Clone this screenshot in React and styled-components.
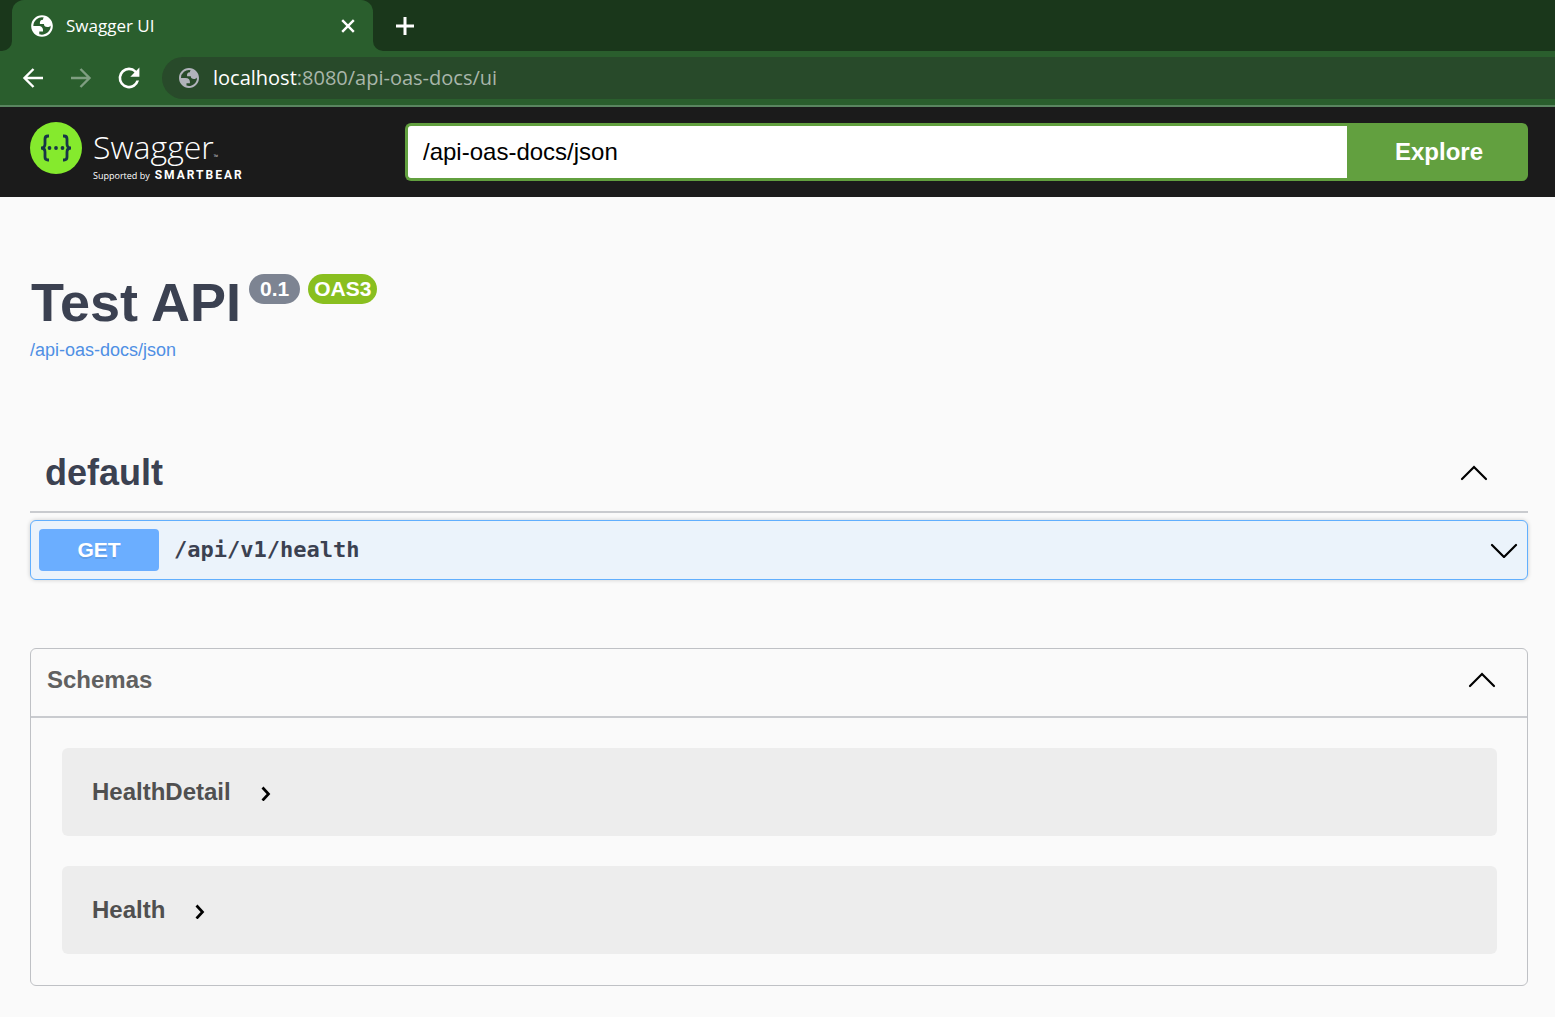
import React from "react";
import styled, { createGlobalStyle } from "styled-components";

const GlobalStyle = createGlobalStyle`
  * { box-sizing: border-box; }
  body {
    margin: 0;
    background: #fafafa;
    font-family: "Liberation Sans", Arial, sans-serif;
    color: #3b4151;
  }
  h1, h2, h3 { margin: 0; }
  button, input { font-family: inherit; }
  button { border: 0; padding: 0; background: none; color: inherit; cursor: pointer; }
  svg { display: block; flex: none; }
`;

const TabStrip = styled.div`
  display: flex;
  align-items: stretch;
  height: 51px;
  background: #2a5e2d;
`;
const StripEdge = styled.div`
  width: 12px;
  background: #1a371b;
  border-bottom-right-radius: 10px;
`;
const StripRest = styled.div`
  flex: 1;
  display: flex;
  align-items: center;
  padding-left: 22px;
  background: #1a371b;
  border-bottom-left-radius: 10px;
`;
const TabSlot = styled.div`
  display: flex;
  background: #1a371b;
`;
const Tab = styled.div`
  width: 361px;
  display: flex;
  align-items: center;
  padding: 0 15px 0 17px;
  gap: 11px;
  background: #2a5e2d;
  border-radius: 12px 12px 0 0;
  color: #fff;
`;
const TabTitle = styled.span`
  flex: 1;
  font: 17px/24px "Open Sans", "Noto Sans", sans-serif;
`;
const IconButton = styled.button`
  color: ${(p) => (p.$dim ? "#7f9e81" : "#fff")};
`;
const Toolbar = styled.div`
  display: flex;
  align-items: center;
  height: 56px;
  padding-left: 20px;
  gap: 22px;
  background: #2a5e2d;
  border-bottom: 2px solid #5a8560;
`;
const AddressBar = styled.div`
  flex: 1;
  display: flex;
  align-items: center;
  height: 42px;
  margin-left: -2px;
  padding-left: 15px;
  gap: 12px;
  border-radius: 21px 0 0 21px;
  background: #284a2a;
  color: #a9b6aa;
  font: 20px/28px "Open Sans", "Noto Sans", sans-serif;
`;
const Host = styled.span`
  color: #fff;
`;

const TopBar = styled.header`
  display: flex;
  align-items: center;
  height: 90px;
  padding: 0 27px 0 30px;
  background: #1b1b1b;
`;
const Brand = styled.a`
  display: flex;
  width: 375px;
  gap: 11px;
  color: #fff;
  text-decoration: none;
`;
const BrandText = styled.span`
  display: flex;
  flex-direction: column;
  padding-top: 4px;
  font-family: "Open Sans", "Noto Sans", sans-serif;
`;
const BrandName = styled.span`
  font-size: 32px;
  line-height: 42px;
  font-weight: 350;
  small { font-size: 6px; line-height: 6px; }
`;
const BrandBy = styled.span`
  display: flex;
  align-items: baseline;
  gap: 5px;
  font-size: 9px;
  line-height: 14px;
  strong {
    font-family: Roboto, sans-serif;
    font-size: 12px;
    letter-spacing: 2px;
  }
`;
const SpecForm = styled.form`
  flex: 1;
  display: flex;
  height: 58px;
`;
const SpecInput = styled.input`
  flex: 1;
  min-width: 0;
  padding: 0 15px;
  border: 3px solid #62a03f;
  border-right: 0;
  border-radius: 6px 0 0 6px;
  background: #fff;
  color: #000;
  font-size: 24px;
  outline: 0;
`;
const ExploreButton = styled.button`
  width: 181px;
  padding-left: 3px;
  border-radius: 0 6px 6px 0;
  background: #62a03f;
  color: #fff;
  font-size: 24px;
  font-weight: 700;
`;

const Page = styled.main`
  padding: 74px 27px 31px 30px;
`;
const Info = styled.section`
  height: 161px;
`;
const TitleRow = styled.div`
  display: flex;
  align-items: flex-start;
  gap: 8px;
`;
const Title = styled.h1`
  padding-left: 1px;
  font-size: 54px;
  line-height: 62px;
`;
const Badge = styled.span`
  margin-top: 3px;
  height: 30px;
  padding: 0 ${(p) => (p.$oas ? 6 : 11)}px;
  border-radius: 15px;
  background: ${(p) => (p.$oas ? "#89bf1f" : "#7d8492")};
  color: #fff;
  font-size: 21px;
  line-height: 30px;
  font-weight: 700;
`;
const SpecLink = styled.a`
  display: inline-block;
  margin-top: 7px;
  color: #4f8fe4;
  font-size: 18px;
  line-height: 20px;
  text-decoration: none;
`;
const TagHeader = styled.div`
  display: flex;
  align-items: center;
  justify-content: space-between;
  height: 81px;
  padding: 3px 40px 0 15px;
  border-bottom: 2px solid #c9cbcf;
`;
const TagName = styled.h2`
  font-size: 36px;
  line-height: 44px;
`;
const Operation = styled.button`
  display: flex;
  align-items: center;
  width: 100%;
  height: 60px;
  margin-top: 7px;
  padding: 0 9px 0 8px;
  border: 1px solid #61affe;
  border-radius: 6px;
  background: #ebf3fb;
  box-shadow: 0 0 4px rgba(0, 0, 0, 0.19);
`;
const Method = styled.span`
  width: 120px;
  border-radius: 4px;
  background: #6baeff;
  color: #fff;
  font-size: 21px;
  line-height: 42px;
  font-weight: 700;
  text-shadow: 0 2px 0 rgba(0, 0, 0, 0.1);
`;
const Path = styled.span`
  flex: 1;
  padding: 0 15px;
  color: #3b4151;
  font: 700 22px/30px "DejaVu Sans Mono", monospace;
  text-align: left;
`;
const Models = styled.section`
  margin-top: 68px;
  border: 1px solid #bfc1c5;
  border-radius: 6px;
`;
const ModelsHeader = styled.div`
  display: flex;
  align-items: center;
  justify-content: space-between;
  height: 69px;
  padding: 0 31px 6px 16px;
  border-bottom: 2px solid #c9cbcf;
`;
const ModelsTitle = styled.h3`
  color: #606060;
  font-size: 24px;
  line-height: 28px;
`;
const ModelList = styled.div`
  display: flex;
  flex-direction: column;
  gap: 30px;
  padding: 30px 30px 31px 31px;
`;
const Model = styled.button`
  display: flex;
  align-items: center;
  gap: 30px;
  height: 88px;
  padding: 0 30px;
  border-radius: 6px;
  background: #ededed;
  color: #505050;
  font-size: 24px;
  line-height: 28px;
  font-weight: 700;
`;

const Globe = ({ color, size }) => (
  <svg width={size} height={size} viewBox="0 0 24 24" fill={color} fillRule="evenodd" aria-hidden="true">
    <path d="M12 2C6.480 2 2 6.480 2 12s4.480 10 10 10 10-4.480 10-10S17.520 2 12 2zM4 12h4.400c3.407.022 4.922 1.730 4.543 5.127H9.488v2.470a8.004 8.004 0 0 0 10.498-8.083C19.327 12.504 18.332 13 17 13c-2.137 0-3.206-.916-3.206-2.750h-3.748c-.274-2.728.683-4.092 2.870-4.092 0-.975.327-1.597.811-1.970A8.004 8.004 0 0 0 4 12z" />
  </svg>
);
const Chevron = ({ down }) => (
  <svg width="28" height="16" viewBox="0 0 28 16" fill="none" stroke="#000" strokeWidth="2.200" strokeLinecap="round" aria-hidden="true">
    <path d={down ? "M2 3l12 12L26 3" : "M2 14L14 2l12 12"} />
  </svg>
);
const Arrow = () => (
  <svg width="10" height="18" viewBox="0 0 10 18" fill="none" stroke="#000" strokeWidth="2.700" aria-hidden="true">
    <path d="M1.500 4.500l6 6.500-6 6.500" />
  </svg>
);

export default function App() {
  return (
    <>
      <GlobalStyle />
      <TabStrip>
        <StripEdge />
        <TabSlot>
          <Tab>
            <Globe color="#fff" size={26} />
            <TabTitle>Swagger UI</TabTitle>
            <IconButton aria-label="Close tab">
              <svg width="20" height="20" viewBox="0 0 20 20" stroke="currentColor" strokeWidth="2.400"><path d="M4.200 4.200l11.600 11.600M15.800 4.200L4.200 15.800" /></svg>
            </IconButton>
          </Tab>
        </TabSlot>
        <StripRest>
          <IconButton aria-label="New tab">
            <svg width="20" height="20" viewBox="0 0 20 20" stroke="currentColor" strokeWidth="3"><path d="M10 1v18M1 10h18" /></svg>
          </IconButton>
        </StripRest>
      </TabStrip>
      <Toolbar>
        <IconButton aria-label="Back">
          <svg width="26" height="26" viewBox="0 0 26 26" fill="none" stroke="currentColor" strokeWidth="2.400"><path d="M23 13H4.500M13.500 4l-9 9 9 9" /></svg>
        </IconButton>
        <IconButton $dim aria-label="Forward">
          <svg width="26" height="26" viewBox="0 0 26 26" fill="none" stroke="currentColor" strokeWidth="2.400"><path d="M3 13h18.500M12.500 4l9 9-9 9" /></svg>
        </IconButton>
        <IconButton aria-label="Reload">
          <svg width="26" height="26" viewBox="2 2 20 20" fill="currentColor"><path d="M17.650 6.350A7.960 7.960 0 0 0 12 4a8 8 0 1 0 7.730 10h-2.080A6 6 0 1 1 12 6c1.660 0 3.140.69 4.220 1.780L13 11h7V4z" /></svg>
        </IconButton>
        <AddressBar>
          <Globe color="#b1b3bb" size={24} />
          <span><Host>localhost</Host>:8080/api-oas-docs/ui</span>
        </AddressBar>
      </Toolbar>
      <TopBar>
        <Brand href="#" aria-label="Swagger">
          <svg width="52" height="52" viewBox="0 0 52 52" fill="none" aria-hidden="true">
            <circle cx="26" cy="26" r="26" fill="#85ea2d" />
            <path d="M19 14h-1q-3 0-3 3v5q0 4-4 4 4 0 4 4v5q0 3 3 3h1M33 14h1q3 0 3 3v5q0 4 4 4-4 0-4 4v5q0 3-3 3h-1" stroke="#173647" strokeWidth="2.800" />
            <g fill="#173647"><circle cx="19.500" cy="26" r="1.900" /><circle cx="26" cy="26" r="1.900" /><circle cx="32.500" cy="26" r="1.900" /></g>
          </svg>
          <BrandText>
            <BrandName>Swagger<small>™</small></BrandName>
            <BrandBy>Supported by <strong>SMARTBEAR</strong></BrandBy>
          </BrandText>
        </Brand>
        <SpecForm onSubmit={(e) => e.preventDefault()}>
          <SpecInput aria-label="Definition URL" defaultValue="/api-oas-docs/json" />
          <ExploreButton>Explore</ExploreButton>
        </SpecForm>
      </TopBar>
      <Page>
        <Info>
          <TitleRow>
            <Title>Test API</Title>
            <Badge>0.1</Badge>
            <Badge $oas>OAS3</Badge>
          </TitleRow>
          <SpecLink href="#">/api-oas-docs/json</SpecLink>
        </Info>
        <TagHeader>
          <TagName>default</TagName>
          <IconButton aria-label="Collapse default"><Chevron /></IconButton>
        </TagHeader>
        <Operation>
          <Method>GET</Method>
          <Path>/api/v1/health</Path>
          <Chevron down />
        </Operation>
        <Models>
          <ModelsHeader>
            <ModelsTitle>Schemas</ModelsTitle>
            <IconButton aria-label="Collapse schemas"><Chevron /></IconButton>
          </ModelsHeader>
          <ModelList>
            {["HealthDetail", "Health"].map((name) => (
              <Model key={name}>{name}<Arrow /></Model>
            ))}
          </ModelList>
        </Models>
      </Page>
    </>
  );
}
